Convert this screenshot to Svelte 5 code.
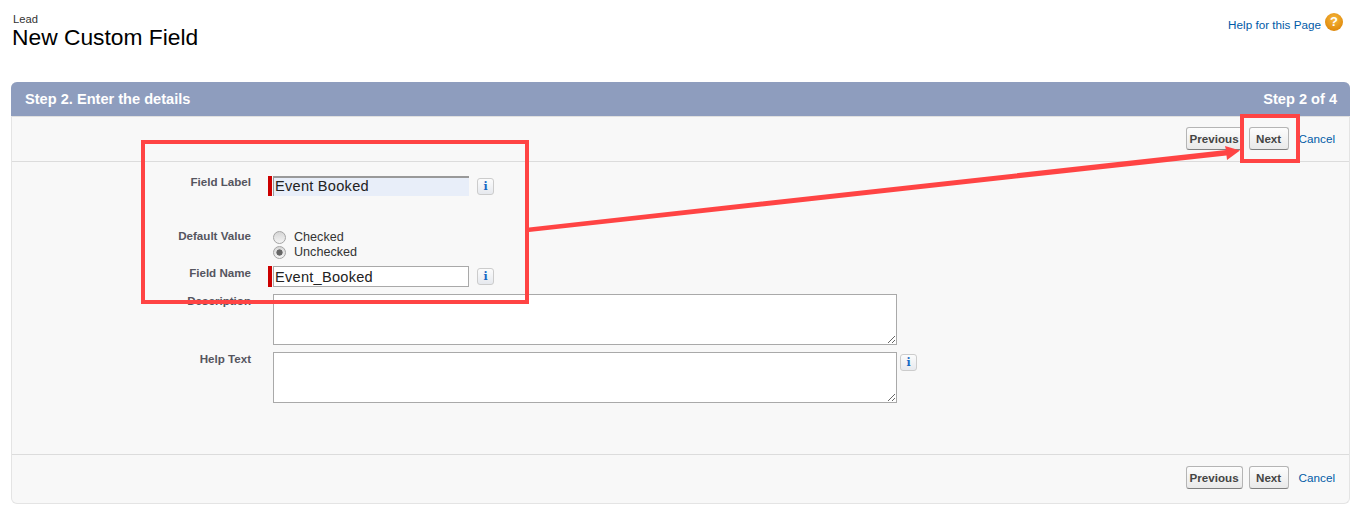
<script>
  const actions = ['Previous', 'Next'];
</script>

<div class="page">
  <header class="top">
    <div class="titles">
      <div class="crumb">Lead</div>
      <h1>New Custom Field</h1>
    </div>
    <div class="help">
      <a href="#help">Help for this Page</a>
      <span class="qmark">?</span>
    </div>
  </header>

  <section class="panel">
    <div class="head">
      <h2>Step 2. Enter the details</h2>
      <span>Step 2 of 4</span>
    </div>

    <div class="bar upper">
      {#each actions as a}<button class="btn">{a}</button>{/each}
      <a class="cancel" href="#cancel">Cancel</a>
    </div>

    <div class="form">
      <div class="row r-label">
        <div class="lab">Field Label</div>
        <span class="req"></span>
        <input class="txt focus" value="Event Booked" />
        <button class="info">i</button>
      </div>

      <div class="row r-default">
        <div class="lab">Default Value</div>
        <div class="radios">
          <label><input type="radio" name="d" />Checked</label>
          <label><input type="radio" name="d" checked />Unchecked</label>
        </div>
      </div>

      <div class="row r-name">
        <div class="lab">Field Name</div>
        <span class="req"></span>
        <input class="txt" value="Event_Booked" />
        <button class="info">i</button>
      </div>

      <div class="row r-area">
        <div class="lab">Description</div>
        <textarea></textarea>
      </div>

      <div class="row r-area r-help">
        <div class="lab">Help Text</div>
        <textarea></textarea>
        <button class="info">i</button>
      </div>
    </div>

    <div class="bar lower">
      {#each actions as a}<button class="btn">{a}</button>{/each}
      <a class="cancel" href="#cancel">Cancel</a>
    </div>
  </section>

  <svg class="notes" width="1354" height="509" viewBox="0 0 1354 509" aria-hidden="true">
    <rect x="143" y="142" width="384" height="160" />
    <rect x="1242" y="116" width="56" height="45" />
    <polygon class="arrow" points="529,227.5 1226,150 1225,146 1240,150.5 1227,160 1226.5,155.5 529,232" />
  </svg>
</div>

<style>
  :global(body) {
    margin: 0;
    background: #fff;
    font-family: "Liberation Sans", Arial, sans-serif;
  }
  .page {
    position: relative;
    width: 1354px;
    height: 509px;
    overflow: hidden;
    box-sizing: border-box;
    padding: 13px 4px 0 11px;
  }
  .top {
    display: flex;
    justify-content: space-between;
    height: 69px;
  }
  .crumb {
    font-size: 11.2px;
    line-height: 12px;
    color: #333;
    padding-left: 2px;
  }
  h1 {
    margin: 0;
    padding-left: 1px;
    font-size: 22.8px;
    font-weight: 400;
    line-height: 24px;
    color: #000;
  }
  .help {
    display: flex;
    align-items: flex-start;
    gap: 4px;
    padding-right: 7px;
  }
  .help a {
    font-size: 11.7px;
    line-height: 14px;
    margin-top: 5px;
    color: #015ba7;
    text-decoration: none;
  }
  .qmark {
    width: 18px;
    height: 18px;
    border-radius: 50%;
    background: radial-gradient(circle at 50% 35%, #f6b83e, #e08a0c 75%, #b96f0a);
    color: #fff;
    font-size: 13px;
    font-weight: 700;
    line-height: 18px;
    text-align: center;
  }
  .panel {
    box-sizing: border-box;
    width: 1339px;
    height: 422px;
    border: 1px solid #e4e4e4;
    border-top: 0;
    border-radius: 6px;
    background: #f8f8f8;
    display: flex;
    flex-direction: column;
  }
  .head {
    display: flex;
    justify-content: space-between;
    align-items: center;
    height: 34px;
    margin: 0 -1px;
    padding: 0 13px 0 14px;
    background: #8e9dbe;
    border-radius: 6px 6px 0 0;
    color: #fff;
    font-size: 14.6px;
    font-weight: 700;
  }
  h2 {
    margin: 0;
    font-size: 14.6px;
  }
  .bar {
    display: flex;
    justify-content: flex-end;
    align-items: flex-start;
    gap: 6px;
    padding-right: 14px;
    box-sizing: border-box;
  }
  .upper {
    height: 46px;
    padding-top: 10px;
    border-top: 1px solid #e0e0e0;
    border-bottom: 1px solid #dcdcdc;
  }
  .lower {
    padding-top: 11px;
    border-top: 1px solid #dcdcdc;
    height: 49px;
  }
  .btn {
    width: 57px;
    height: 23px;
    padding: 0;
    font: 700 11.6px "Liberation Sans", Arial, sans-serif;
    color: #444;
    border: 1px solid #b5b5b5;
    border-bottom-color: #7f7f7f;
    border-radius: 3px;
    background: linear-gradient(#fdfdfd, #e9e9e9);
  }
  .btn + .btn {
    width: 40px;
  }
  .cancel {
    margin-left: 4px;
    padding-top: 5px;
    font-size: 11.7px;
    line-height: 14px;
    color: #015ba7;
    text-decoration: none;
  }
  .form {
    flex: 1;
    padding-top: 14px;
    box-sizing: border-box;
  }
  .row {
    display: flex;
    align-items: flex-start;
  }
  .lab {
    width: 239px;
    margin-right: 17px;
    flex: none;
    text-align: right;
    font-size: 11.6px;
    font-weight: 700;
    line-height: 14px;
    color: #55555f;
  }
  .r-label .lab { margin-top: -1px; }
  .r-label { height: 20px; }
  .r-default {
    margin-top: 33px;
    height: 30px;
  }
  .r-default .lab { margin-top: 0; }
  .r-name {
    margin-top: 7px;
    height: 21px;
  }
  .r-name .lab { margin-top: 0; }
  .r-area {
    margin-top: 7px;
    height: 51px;
  }
  .r-area .lab { margin-top: 0; }
  .req {
    width: 4px;
    height: 100%;
    background: #c00;
    margin-right: 1px;
    flex: none;
  }
  .txt {
    box-sizing: border-box;
    width: 196px;
    height: 100%;
    padding: 0 0 0 1px;
    font: 14.6px "Liberation Sans", Arial, sans-serif;
    letter-spacing: 0.25px;
    color: #222;
    border: 1px solid #a9a9a9;
    background: #fff;
    outline: 0;
  }
  .focus {
    border: 0;
    border-top: 2px solid #999;
    border-left: 1px solid #999;
    padding-bottom: 2px;
    background: #e8eef9;
  }
  .info {
    width: 17px;
    height: 17px;
    padding: 0;
    margin: 2px 0 0 8px;
    border: 1px solid #ccc;
    border-radius: 3px;
    background: linear-gradient(#fcfcfc, #e6e9ee);
    color: #1468c4;
    font: 700 11px/14px "DejaVu Serif", serif;
  }
  .radios {
    display: flex;
    flex-direction: column;
    margin-left: 5px;
    padding-top: 1px;
    font-size: 12.6px;
    line-height: 15px;
    color: #333;
  }
  .radios label {
    display: flex;
    align-items: center;
    height: 15px;
  }
  .radios input {
    appearance: none;
    box-sizing: border-box;
    width: 13px;
    height: 13px;
    margin: 0 8px 0 0;
    border: 1px solid #a4a4a4;
    border-radius: 50%;
    background: linear-gradient(#d6d6d6, #f4f4f4);
  }
  .radios input:checked {
    background: radial-gradient(circle, #666 0 2.8px, transparent 3.4px), linear-gradient(#d6d6d6, #f4f4f4);
  }
  textarea {
    box-sizing: border-box;
    width: 624px;
    height: 51px;
    margin: 0 0 0 5px;
    padding: 2px;
    border: 1px solid #a9a9a9;
    background: #fff;
    flex: none;
  }
  .r-area .info {
    margin: 2px 0 0 3px;
  }
  .notes {
    position: absolute;
    left: 0;
    top: 0;
    pointer-events: none;
  }
  .notes rect {
    fill: none;
    stroke: #ff4444;
    stroke-width: 4;
  }
  .arrow {
    fill: #ff4444;
  }
</style>
